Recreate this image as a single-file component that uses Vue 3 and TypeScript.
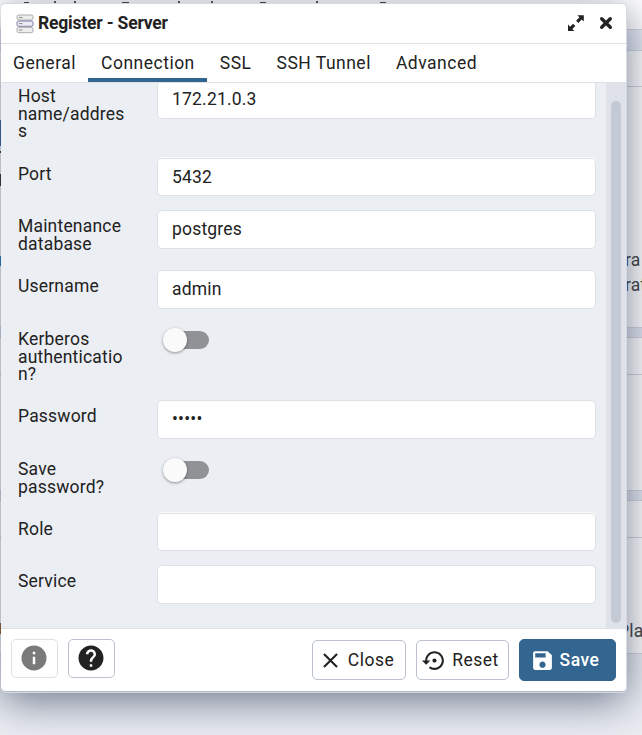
<script setup lang="ts">
import { ref } from 'vue'

interface Field {
  label: string
  kind: 'text' | 'password' | 'switch'
  value: string
  size: string
}

const tabs = ['General', 'Connection', 'SSL', 'SSH Tunnel', 'Advanced']
const active = ref('Connection')
const fields: Field[] = [
  { label: 'Host name/address', kind: 'text', value: '172.21.0.3', size: 'host' },
  { label: 'Port', kind: 'text', value: '5432', size: 'port' },
  { label: 'Maintenance database', kind: 'text', value: 'postgres', size: 'database' },
  { label: 'Username', kind: 'text', value: 'admin', size: 'username' },
  { label: 'Kerberos authentication?', kind: 'switch', value: '', size: 'kerberos' },
  { label: 'Password', kind: 'password', value: '•••••', size: 'secret' },
  { label: 'Save password?', kind: 'switch', value: '', size: 'save-password' },
  { label: 'Role', kind: 'text', value: '', size: 'role' },
  { label: 'Service', kind: 'text', value: '', size: 'service' },
]
</script>

<template>
  <div class="desktop">
    <div class="workspace">
      <div class="ws-top"></div>
      <div class="ws-strip"></div>
      <div class="ws-head first"></div>
      <div class="ws-body intro"><span>ra</span><span>rat</span></div>
      <div class="ws-gap"></div>
      <div class="ws-head"></div>
      <div class="ws-body links"></div>
      <div class="ws-gap"></div>
      <div class="ws-head"></div>
      <div class="ws-body planet"><span>Pla</span></div>
    </div>
    <!-- slivers of the workspace left visible around the dialog -->
    <svg class="slivers" width="642" height="735" viewBox="0 0 642 735">
      <path d="M24 2.5h5M122 2.5h7M260 2.5h6M380 2.5h6" stroke="#444" />
      <path d="M55 1v2M75 1v2M179 1v2M212 1v2M317 1v2" stroke="#555" stroke-width="2" />
      <path d="M.5 120v26" stroke="#39699b" />
      <path d="M.5 151v2M.5 174v12" stroke="#333" />
      <path d="M.5 256v10" stroke="#2b83c2" />
      <path d="M.5 623v11" stroke="#a0622c" />
    </svg>

    <section class="dialog">
      <header class="title">
        <svg class="server" width="18" height="20" viewBox="0 0 18 20">
          <g stroke-width="1" fill="#eeeeee">
            <rect x="1" y="1" width="16" height="5" rx="1.7" stroke="#aaa" />
            <rect x="1" y="7" width="16" height="5.3" rx="1.7" fill="#ececf6" stroke="#7778a0" />
            <rect x="1" y="13.3" width="16" height="5.4" rx="1.7" stroke="#aaa" />
          </g>
          <path d="M3 3.5h3.5M3 9.6h3.5M3 16h3.5" stroke="#888" />
        </svg>
        <h1>Register - Server</h1>
        <svg class="expand" width="18" height="18" viewBox="0 0 18 18" fill="#222">
          <path d="M10.4 1.2h6.4v6.4l-2.1-2.1-3.4 3.4-2.2-2.2 3.4-3.4zM1 10.6v6.4h6.4l-2.1-2.1 3-3-2.2-2.2-3 3z" />
        </svg>
        <svg class="x" width="14" height="14" viewBox="0 0 14 14" fill="none" stroke="#222" stroke-width="3.4" stroke-linecap="round">
          <path d="M2.7 2.7l8.6 8.6m0-8.6l-8.6 8.6" />
        </svg>
      </header>
      <nav class="tabs">
        <button v-for="tab in tabs" :key="tab" :class="{ active: tab === active }" @click="active = tab">{{ tab }}</button>
      </nav>
      <div class="content">
        <div class="form">
          <div v-for="f in fields" :key="f.label" class="row" :class="f.size">
            <label>{{ f.label }}</label>
            <span v-if="f.kind === 'switch'" class="switch"><i></i></span>
            <div v-else class="input">{{ f.value }}</div>
          </div>
        </div>
        <div class="scroll"><div class="thumb"></div></div>
      </div>
      <footer>
        <button class="btn icon muted">
          <svg width="30" height="30" viewBox="0 0 24 24" fill="#7a7a7a"><path d="M12 2a10 10 0 1 0 0 20 10 10 0 0 0 0-20zm1 15h-2v-6h2zm0-8h-2V7h2z" /></svg>
        </button>
        <button class="btn icon help">
          <svg width="30" height="30" viewBox="0 0 24 24" fill="#222"><path d="M12 2C6.48 2 2 6.48 2 12s4.48 10 10 10 10-4.48 10-10S17.52 2 12 2zm1 17h-2v-2h2v2zm2.07-7.75l-.9.92C13.45 12.9 13 13.5 13 15h-2v-.5c0-1.1.45-2.1 1.17-2.83l1.24-1.26c.37-.36.59-.86.59-1.41 0-1.1-.9-2-2-2s-2 .9-2 2H8c0-2.21 1.79-4 4-4s4 1.79 4 4c0 .88-.36 1.68-.93 2.25z" /></svg>
        </button>
        <span class="spacer"></span>
        <button class="btn close">
          <svg width="25" height="25" viewBox="0 0 24 24" fill="#222"><path d="M19 6.41L17.59 5 12 10.59 6.41 5 5 6.41 10.59 12 5 17.59 6.41 19 12 13.41 17.59 19 19 17.59 13.41 12z" /></svg>
          Close
        </button>
        <button class="btn reset">
          <svg width="25" height="25" viewBox="0 0 24 24" fill="#222"><path d="M14 12c0-1.1-.9-2-2-2s-2 .9-2 2 .9 2 2 2 2-.9 2-2zm-2-9c-4.97 0-9 4.03-9 9H0l4 4 4-4H5c0-3.87 3.13-7 7-7s7 3.13 7 7-3.13 7-7 7c-1.51 0-2.91-.49-4.06-1.3l-1.42 1.44C8.04 20.3 9.94 21 12 21c4.97 0 9-4.03 9-9s-4.03-9-9-9z" transform="rotate(0)" /></svg>
          Reset
        </button>
        <button class="btn save">
          <svg width="25" height="25" viewBox="0 0 24 24" fill="#fff"><path d="M17 3H5c-1.11 0-2 .9-2 2v14c0 1.1.89 2 2 2h14c1.1 0 2-.9 2-2V7l-4-4zm-5 16c-1.66 0-3-1.34-3-3s1.34-3 3-3 3 1.34 3 3-1.34 3-3 3zm3-10H5V5h10v4z" /></svg>
          Save
        </button>
      </footer>
    </section>
  </div>
</template>

<style>
body { margin: 0; overflow: hidden; }
</style>

<style scoped>
* { box-sizing: border-box; }
.desktop {
  position: relative;
  width: 642px;
  height: 735px;
  overflow: hidden;
  background: #ebeef3;
  font-family: Roboto, sans-serif;
  font-size: 17.5px;
  letter-spacing: 0.19px;
  color: #222;
}
.workspace { color: #444; }
.ws-top { height: 29px; background: #fff; }
.ws-strip { height: 22px; background: #e6eaf2; border: solid #d3d7e0; border-width: 1px 0; }
.ws-head { height: 37px; background: #fff; border-bottom: 1px solid #d3d7e0; }
.ws-head.first { height: 36px; }
.ws-body { background: #fff; display: flex; flex-direction: column; padding-left: 625px; line-height: 25px; white-space: nowrap; }
.ws-body.intro { height: 240px; padding-top: 161px; }
.ws-body.links { height: 115px; }
.ws-body.planet { height: 116px; padding: 81px 0 0 618px; border-bottom: 1px solid #d3d7e0; }
.ws-gap { height: 11px; background: #e4e8f1; border: solid #d3d7e0; border-width: 1px 0; }
.slivers { position: absolute; left: 0; top: 0; }
.dialog {
  position: absolute;
  left: 1px;
  top: 3px;
  width: 626px;
  height: 689px;
  border: solid #d5d9e2;
  border-width: 1px 1px 1px 0;
  border-bottom-color: #b3b9c5;
  border-radius: 5px;
  overflow: hidden;
  background: #fff;
  display: flex;
  flex-direction: column;
  box-shadow: 0 1px 0 #d5d9e2, 0 10px 45px rgba(40, 52, 80, 0.5), 0 8px 30px -6px rgba(40, 52, 80, 0.25);
}
.title { height: 40px; flex: none; display: flex; align-items: center; padding: 0 14px 1px 15px; border-bottom: 1px solid #dde0e6; }
.server { position: relative; top: 1px; }
h1 { margin: 0 auto 0 4px; font-size: 17.5px; font-weight: 700; letter-spacing: -0.19px; }
.expand { margin-right: 14px; }
.x { margin-right: -1px; }
.tabs { height: 39px; flex: none; display: flex; border-bottom: 1px solid #dde0e6; }
button { font: inherit; letter-spacing: inherit; color: inherit; }
.tabs button { border: 0; border-bottom: 4px solid transparent; background: none; padding: 4px 12px 0 13px; line-height: 30px; letter-spacing: 0.5px; }
.tabs button:first-child { padding-left: 12px; padding-right: 12px; }
.tabs .active { border-bottom-color: #326690; }
.content { height: 546px; flex: none; display: flex; background: #ebeef3; border-bottom: 1px solid #dde0e6; overflow: hidden; }
.form { flex: 1; padding: 0 10px 0 17px; }
.row { display: flex; height: 52px; }
label { width: 108px; margin-right: 31px; padding-top: 8px; line-height: 17.5px; overflow-wrap: anywhere; }
.input { flex: 1; height: 39px; border: 1px solid #dde0e6; border-radius: 5px; background: #fff; padding: 0 14px; line-height: 37px; }
.host { height: 75px; }
.host label { padding-top: 5px; }
.host .input { margin-top: -3px; }
.port .input, .role .input { height: 38px; box-shadow: 0 -1px 0 #fafbfc; }
.database { height: 60px; }
.username { height: 60px; }
.kerberos { height: 70px; }
.kerberos label, .save-password label { padding-top: 1px; }
.secret { height: 60px; }
.save-password { height: 53px; }
.switch { position: relative; width: 52px; height: 18px; margin-top: 1px; }
.switch::before { content: ''; display: block; margin-left: 10px; width: 42px; height: 18px; border-radius: 9px; background: #919295; }
.switch i { position: absolute; left: 6px; top: -3px; width: 24px; height: 24px; border-radius: 50%; background: #fafafa; box-shadow: 0 1px 3px rgba(0, 0, 0, 0.4); }
.scroll { width: 20px; padding: 18px 5px 5px; background: #dfe2e9; }
.thumb { height: 100%; border-radius: 5px; background: #c4cad4; }
footer { flex: 1; display: flex; padding: 10px 10px 0; }
.btn { display: flex; align-items: center; justify-content: center; height: 40px; padding: 0 6px 0 0; border: 1px solid #bac1cd; border-radius: 5px; background: #fff; margin-top: 1px; letter-spacing: 0.5px; }
.btn.icon { width: 47px; height: 39px; margin: 0 10px 0 0; padding: 0 2px 2px 0; }
.btn.muted { border-color: #dde0e6; }
.spacer { flex: 1; }
.close { width: 94px; gap: 5px; }
.btn.reset { width: 93px; gap: 5px; margin-left: 10px; padding-right: 4px; }
.save { width: 97px; height: 42px; gap: 5px; margin: 0 0 0 10px; background: #326690; border-color: #326690; color: #fff; font-weight: 500; }
</style>
